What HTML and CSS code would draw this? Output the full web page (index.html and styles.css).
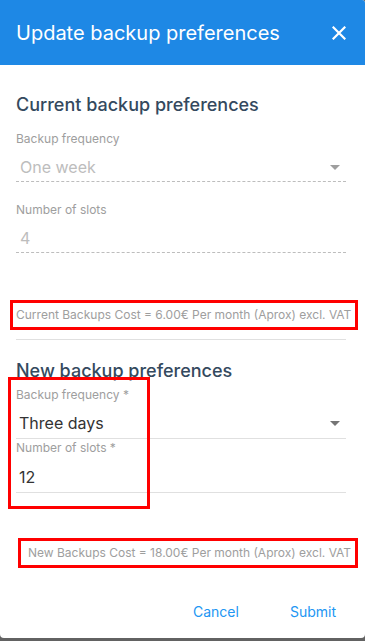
FILE: index.html
```html
<!DOCTYPE html>
<html>

<head>
    <title>Update backup preferences</title>
    <link rel="stylesheet" href="styles.css">
</head>

<body>
    <div class='dialog'>
        <div class='dialog-header'>
            <span class='dialog-title'>Update backup preferences</span>
            <button class='close'>
                <svg width="14" height="14" viewBox="0 0 14 14">
                    <path d="M1.5 1.5 L12.5 12.5 M12.5 1.5 L1.5 12.5" stroke="#fff" stroke-width="2.2" stroke-linecap="square" fill="none"/>
                </svg>
            </button>
        </div>
        <div class='dialog-body'>
            <h2 class='section-title first'>Current backup preferences</h2>
            <div class='field disabled'>
                <label>Backup frequency</label>
                <div class='value select'>One week<span class='arrow'></span></div>
            </div>
            <div class='field disabled'>
                <label>Number of slots</label>
                <div class='value'>4</div>
            </div>

            <div class='cost current'>Current Backups Cost = 6.00€ Per month (Aprox) excl. VAT</div>
            <hr class='divider'>

            <h2 class='section-title'>New backup preferences</h2>
            <div class='new-fields'>
                <div class='field'>
                    <label>Backup frequency *</label>
                    <div class='value select'>Three days<span class='arrow'></span></div>
                </div>
                <div class='field'>
                    <label>Number of slots *</label>
                    <div class='value'>12</div>
                </div>
                <div class='mark'></div>
            </div>

            <div class='cost new'>New Backups Cost = 18.00€ Per month (Aprox) excl. VAT</div>

            <div class='actions'>
                <button class='text-btn'>Cancel</button>
                <button class='text-btn'>Submit</button>
            </div>
        </div>
    </div>
</body>

</html>
```

FILE: styles.css
```css
body {
    margin: 0;
    background-color: #626262;
    font-family: Inter, Roboto, sans-serif;
    height: 641px;
    overflow: hidden;
}

button {
    border: 0;
    outline: none;
    background: none;
    font-family: inherit;
    cursor: pointer;
}

.dialog {
    background-color: #fff;
    height: 638px;
    border-radius: 0 3px 4px 4px;
    overflow: hidden;
}

.dialog-header {
    background-color: #1e88e5;
    height: 65px;
    display: flex;
    align-items: center;
    justify-content: space-between;
    padding: 0 15px 0 16px;
}

.dialog-title {
    color: #fff;
    font-size: 20px;
    font-weight: 400;
}

.close {
    padding: 4px;
    display: flex;
}

.dialog-body {
    padding: 0 19px 0 16px;
}

.section-title {
    margin: 0;
    font-size: 18px;
    font-weight: 500;
    line-height: 24px;
    color: #34495e;
}

.section-title.first {
    margin-top: 28px;
    margin-bottom: 14px;
}

.field label {
    display: block;
    font-size: 12px;
    line-height: 16px;
    color: #9e9e9e;
}

.field .value {
    font-size: 16px;
    line-height: 24px;
    color: #333;
    border-bottom: 1px solid #e0e0e0;
    display: flex;
    justify-content: space-between;
    align-items: center;
}

.field.disabled {
    margin-bottom: 20px;
}

.field.disabled .value {
    margin-top: 8px;
    padding-bottom: 2px;
    color: #bdbdbd;
    border-bottom: 1px dashed #bdbdbd;
    padding-left: 4px;
}

.arrow {
    width: 0;
    height: 0;
    border-left: 5px solid transparent;
    border-right: 5px solid transparent;
    border-top: 5px solid #757575;
    margin-right: 6px;
}

.disabled .arrow {
    border-top-color: #9e9e9e;
}

.cost {
    border: 3px solid #f00;
    font-size: 12px;
    color: #9e9e9e;
    line-height: 24px;
    height: 24px;
    white-space: nowrap;
}

.cost.current {
    margin: 47px -12px 0 -6px;
    padding: 0 0 0 3px;
}

.divider {
    border: 0;
    border-top: 1px solid #e0e0e0;
    margin: 9px 0 19px 0;
}

.new-fields {
    position: relative;
    margin-top: 4px;
}

.new-fields .field .value {
    margin-top: 8px;
    padding-bottom: 3px;
    padding-left: 3px;
}

.new-fields .field + .field {
    margin-top: 1px;
}

.new-fields .field + .field .value {
    margin-top: 9px;
}

.mark {
    position: absolute;
    left: -8px;
    top: -10px;
    width: 136px;
    height: 126px;
    border: 3px solid #f00;
}

.cost.new {
    margin: 45px -12px 0 2px;
    padding: 0 0 0 7px;
}

.actions {
    display: flex;
    justify-content: flex-end;
    gap: 35px;
    margin-top: 30px;
    padding-right: 2px;
}

.text-btn {
    color: #2196f3;
    font-size: 14px;
    line-height: 16px;
    padding: 6px 8px;
}
```
